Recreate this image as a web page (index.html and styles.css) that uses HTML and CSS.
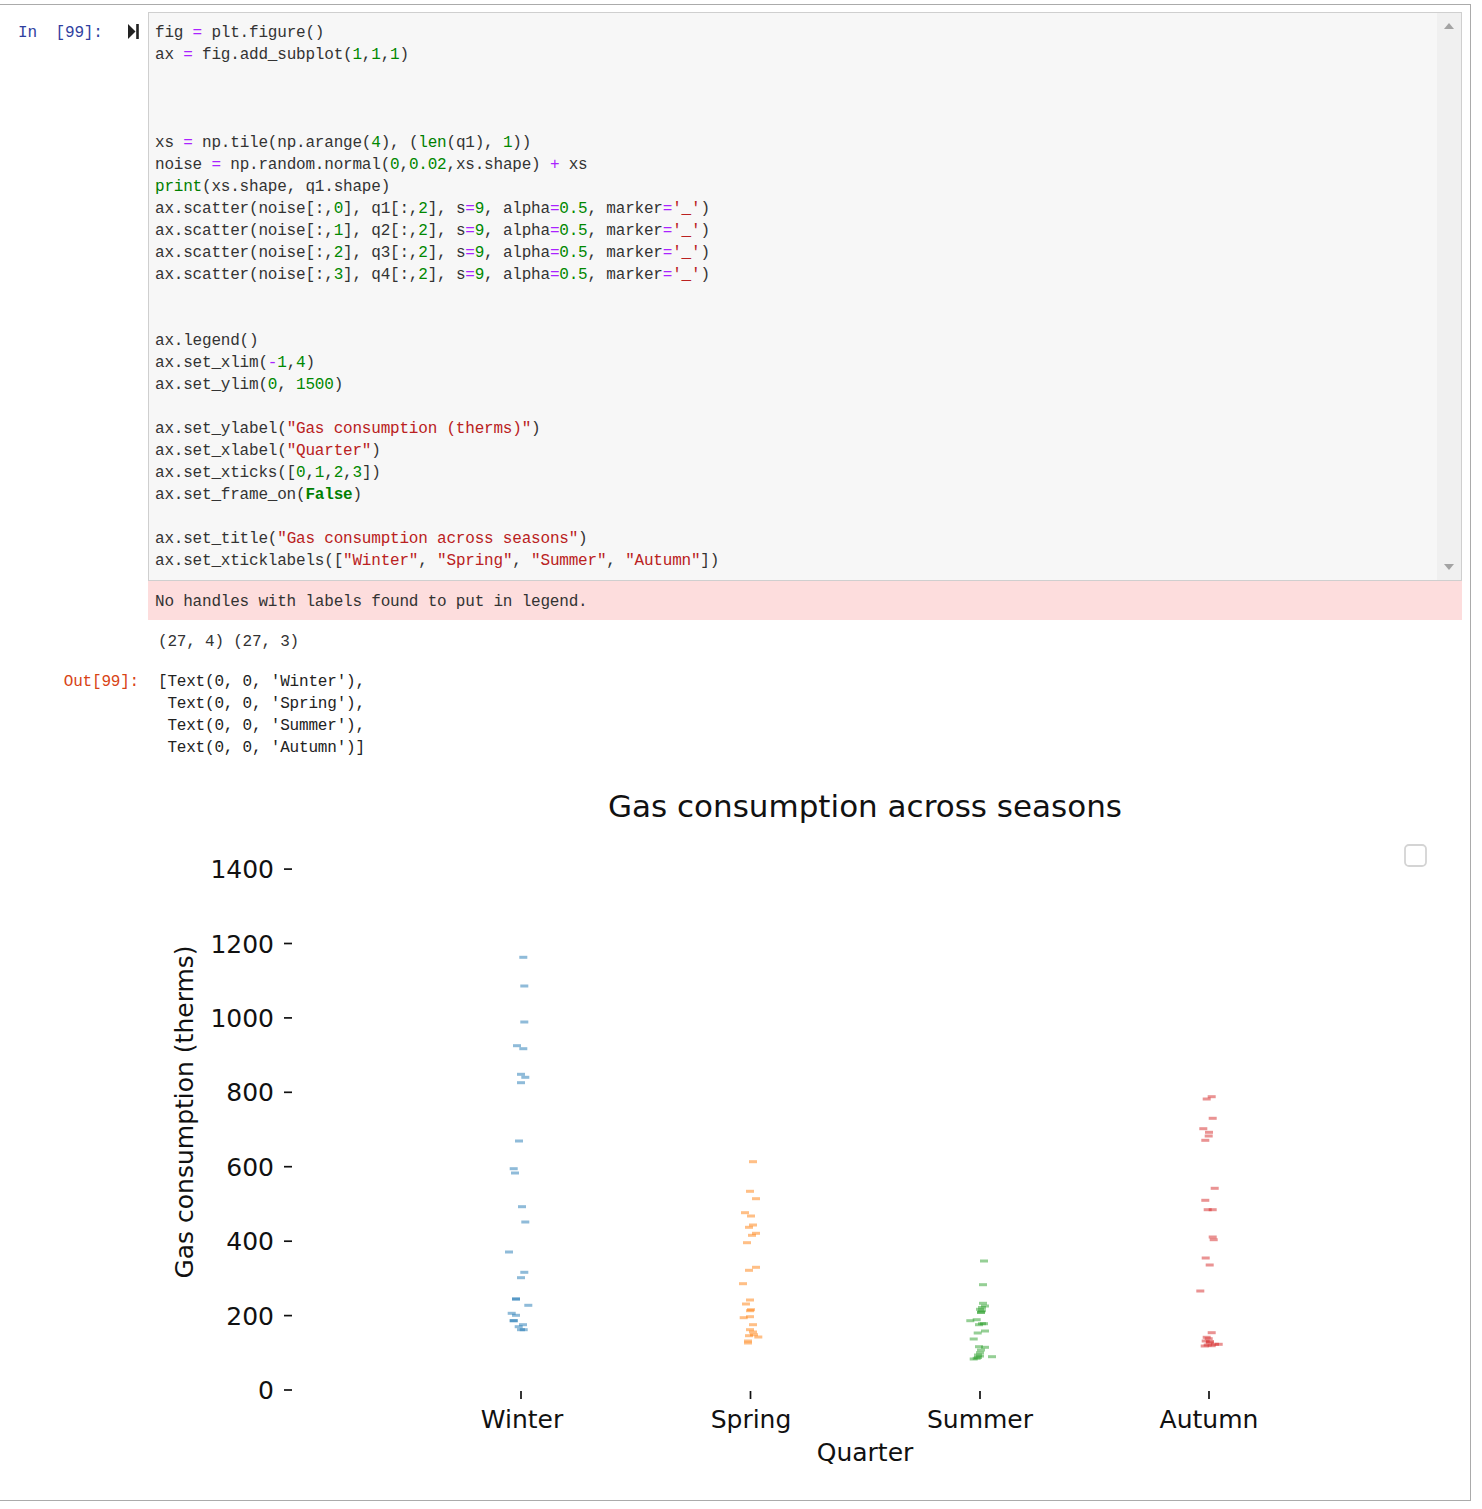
FILE: index.html
```html
<!DOCTYPE html>
<html>
<head>
<meta charset="utf-8">
<title>Notebook cell</title>
<link rel="stylesheet" href="styles.css">
</head>
<body>
<div class="cell">
  <div class="input-row">
    <div class="in-prompt">
      <span class="prompt-text">In&nbsp;&nbsp;[99]:</span>
      <svg class="run-icon" width="11" height="15" viewBox="0 0 11 15"><path d="M0 0 L7.5 7.5 L0 15 Z" fill="#222"/><rect x="8.2" y="0" width="2.6" height="15" fill="#222"/></svg>
    </div>
    <div class="input-box">
      <div class="code">
        <div class="ln">fig <span class="o">=</span> plt.figure()</div>
        <div class="ln">ax <span class="o">=</span> fig.add_subplot(<span class="n">1</span>,<span class="n">1</span>,<span class="n">1</span>)</div>
        <div class="ln"></div>
        <div class="ln"></div>
        <div class="ln"></div>
        <div class="ln">xs <span class="o">=</span> np.tile(np.arange(<span class="n">4</span>), (<span class="b">len</span>(q1), <span class="n">1</span>))</div>
        <div class="ln">noise <span class="o">=</span> np.random.normal(<span class="n">0</span>,<span class="n">0.02</span>,xs.shape) <span class="o">+</span> xs</div>
        <div class="ln"><span class="b">print</span>(xs.shape, q1.shape)</div>
        <div class="ln">ax.scatter(noise[:,<span class="n">0</span>], q1[:,<span class="n">2</span>], s<span class="o">=</span><span class="n">9</span>, alpha<span class="o">=</span><span class="n">0.5</span>, marker<span class="o">=</span><span class="s">'_'</span>)</div>
        <div class="ln">ax.scatter(noise[:,<span class="n">1</span>], q2[:,<span class="n">2</span>], s<span class="o">=</span><span class="n">9</span>, alpha<span class="o">=</span><span class="n">0.5</span>, marker<span class="o">=</span><span class="s">'_'</span>)</div>
        <div class="ln">ax.scatter(noise[:,<span class="n">2</span>], q3[:,<span class="n">2</span>], s<span class="o">=</span><span class="n">9</span>, alpha<span class="o">=</span><span class="n">0.5</span>, marker<span class="o">=</span><span class="s">'_'</span>)</div>
        <div class="ln">ax.scatter(noise[:,<span class="n">3</span>], q4[:,<span class="n">2</span>], s<span class="o">=</span><span class="n">9</span>, alpha<span class="o">=</span><span class="n">0.5</span>, marker<span class="o">=</span><span class="s">'_'</span>)</div>
        <div class="ln"></div>
        <div class="ln"></div>
        <div class="ln">ax.legend()</div>
        <div class="ln">ax.set_xlim(<span class="o">-</span><span class="n">1</span>,<span class="n">4</span>)</div>
        <div class="ln">ax.set_ylim(<span class="n">0</span>, <span class="n">1500</span>)</div>
        <div class="ln"></div>
        <div class="ln">ax.set_ylabel(<span class="s">"Gas consumption (therms)"</span>)</div>
        <div class="ln">ax.set_xlabel(<span class="s">"Quarter"</span>)</div>
        <div class="ln">ax.set_xticks([<span class="n">0</span>,<span class="n">1</span>,<span class="n">2</span>,<span class="n">3</span>])</div>
        <div class="ln">ax.set_frame_on(<span class="k">False</span>)</div>
        <div class="ln"></div>
        <div class="ln">ax.set_title(<span class="s">"Gas consumption across seasons"</span>)</div>
        <div class="ln">ax.set_xticklabels([<span class="s">"Winter"</span>, <span class="s">"Spring"</span>, <span class="s">"Summer"</span>, <span class="s">"Autumn"</span>])</div>
      </div>
      <div class="scrollbar">
        <span class="arrow-up"></span>
        <span class="arrow-down"></span>
      </div>
    </div>
  </div>

  <div class="stderr">No handles with labels found to put in legend.</div>
  <div class="stdout">(27, 4) (27, 3)</div>

  <div class="out-row">
    <div class="out-prompt">Out[99]:</div>
    <div class="out-text">
      <div class="ln">[Text(0, 0, 'Winter'),</div>
      <div class="ln"> Text(0, 0, 'Spring'),</div>
      <div class="ln"> Text(0, 0, 'Summer'),</div>
      <div class="ln"> Text(0, 0, 'Autumn')]</div>
    </div>
  </div>

  <svg class="chart" width="1314" height="730" viewBox="0 0 1314 730">
    <g transform="translate(-148 -762)">
      <text class="title" x="865" y="817">Gas consumption across seasons</text>

      <g class="ticks">
        <line x1="284" y1="1390" x2="292" y2="1390"/>
        <line x1="284" y1="1315.6" x2="292" y2="1315.6"/>
        <line x1="284" y1="1241.2" x2="292" y2="1241.2"/>
        <line x1="284" y1="1166.7" x2="292" y2="1166.7"/>
        <line x1="284" y1="1092.3" x2="292" y2="1092.3"/>
        <line x1="284" y1="1017.9" x2="292" y2="1017.9"/>
        <line x1="284" y1="943.5" x2="292" y2="943.5"/>
        <line x1="284" y1="869.1" x2="292" y2="869.1"/>
        <line x1="521" y1="1391" x2="521" y2="1399"/>
        <line x1="750.5" y1="1391" x2="750.5" y2="1399"/>
        <line x1="980" y1="1391" x2="980" y2="1399"/>
        <line x1="1209" y1="1391" x2="1209" y2="1399"/>
      </g>

      <g class="ylabels">
        <text x="274" y="1399">0</text>
        <text x="274" y="1324.7">200</text>
        <text x="274" y="1250.3">400</text>
        <text x="274" y="1175.8">600</text>
        <text x="274" y="1101.4">800</text>
        <text x="274" y="1027">1000</text>
        <text x="274" y="952.6">1200</text>
        <text x="274" y="878.2">1400</text>
      </g>

      <g class="xlabels">
        <text x="522" y="1428">Winter</text>
        <text x="751" y="1428">Spring</text>
        <text x="980" y="1428">Summer</text>
        <text x="1209" y="1428">Autumn</text>
        <text x="865" y="1461">Quarter</text>
      </g>

      <text class="ylabel" transform="translate(193 1112) rotate(-90)">Gas consumption (therms)</text>

      <rect class="legend" x="1405" y="845" width="21" height="21" rx="4"/>

      <g class="pts blue">
        <rect x="519.3" y="955.8" width="8" height="3"/>
        <rect x="520.3" y="984.5" width="8" height="3"/>
        <rect x="520.3" y="1020.5" width="8" height="3"/>
        <rect x="513" y="1044.2" width="8" height="3"/>
        <rect x="519.3" y="1047.2" width="8" height="3"/>
        <rect x="517" y="1072.8" width="8" height="3"/>
        <rect x="521.3" y="1075.8" width="8" height="3"/>
        <rect x="517" y="1081.2" width="8" height="3"/>
        <rect x="515" y="1139.5" width="8" height="3"/>
        <rect x="509.7" y="1167.2" width="8" height="3"/>
        <rect x="511" y="1171.5" width="8" height="3"/>
        <rect x="518" y="1205.2" width="8" height="3"/>
        <rect x="521.3" y="1220.5" width="8" height="3"/>
        <rect x="505" y="1250.5" width="8" height="3"/>
        <rect x="520.3" y="1270.8" width="8" height="3"/>
        <rect x="517" y="1276.2" width="8" height="3"/>
        <rect x="512" y="1297.5" width="8" height="3"/>
        <rect x="512" y="1297.5" width="8" height="3"/>
        <rect x="524.3" y="1303.8" width="8" height="3"/>
        <rect x="507.7" y="1311.8" width="8" height="3"/>
        <rect x="512" y="1313.8" width="8" height="3"/>
        <rect x="509.7" y="1319.2" width="8" height="3"/>
        <rect x="509.7" y="1319.2" width="8" height="3"/>
        <rect x="514.7" y="1325.2" width="8" height="3"/>
        <rect x="519" y="1323.2" width="8" height="3"/>
        <rect x="519.7" y="1328.2" width="8" height="3"/>
        <rect x="517" y="1328.2" width="8" height="3"/>
      </g>

      <g class="pts orange">
        <rect x="749" y="1160.2" width="8" height="3"/>
        <rect x="746" y="1189.8" width="8" height="3"/>
        <rect x="752" y="1197.2" width="8" height="3"/>
        <rect x="741" y="1211.2" width="8" height="3"/>
        <rect x="747" y="1214.5" width="8" height="3"/>
        <rect x="749" y="1223.5" width="8" height="3"/>
        <rect x="745" y="1225.8" width="8" height="3"/>
        <rect x="752" y="1231.8" width="8" height="3"/>
        <rect x="748" y="1233.8" width="8" height="3"/>
        <rect x="743" y="1241.2" width="8" height="3"/>
        <rect x="752" y="1265.8" width="8" height="3"/>
        <rect x="745" y="1268.8" width="8" height="3"/>
        <rect x="739" y="1282.2" width="8" height="3"/>
        <rect x="746" y="1298.5" width="8" height="3"/>
        <rect x="742" y="1302.5" width="8" height="3"/>
        <rect x="747" y="1308.2" width="8" height="3"/>
        <rect x="746" y="1309.2" width="8" height="3"/>
        <rect x="746" y="1315.2" width="8" height="3"/>
        <rect x="739.7" y="1316.2" width="8" height="3"/>
        <rect x="749" y="1323.2" width="8" height="3"/>
        <rect x="746" y="1328.2" width="8" height="3"/>
        <rect x="749" y="1330.5" width="8" height="3"/>
        <rect x="745" y="1334.2" width="8" height="3"/>
        <rect x="750" y="1333.2" width="8" height="3"/>
        <rect x="754.3" y="1335.5" width="8" height="3"/>
        <rect x="744" y="1339.5" width="8" height="3"/>
        <rect x="744" y="1341.5" width="8" height="3"/>
      </g>

      <g class="pts green">
        <rect x="980" y="1259.5" width="8" height="3"/>
        <rect x="979" y="1283.2" width="8" height="3"/>
        <rect x="979" y="1301.8" width="8" height="3"/>
        <rect x="981" y="1304.5" width="8" height="3"/>
        <rect x="976" y="1307.8" width="8" height="3"/>
        <rect x="978" y="1309.2" width="8" height="3"/>
        <rect x="977" y="1310.8" width="8" height="3"/>
        <rect x="977" y="1310.8" width="8" height="3"/>
        <rect x="966.3" y="1319.2" width="8" height="3"/>
        <rect x="972.7" y="1318.2" width="8" height="3"/>
        <rect x="978" y="1322.2" width="8" height="3"/>
        <rect x="980" y="1322.2" width="8" height="3"/>
        <rect x="975" y="1323.2" width="8" height="3"/>
        <rect x="981" y="1329.5" width="8" height="3"/>
        <rect x="973.7" y="1331.5" width="8" height="3"/>
        <rect x="969.7" y="1337.5" width="8" height="3"/>
        <rect x="975" y="1345.2" width="8" height="3"/>
        <rect x="981" y="1345.8" width="8" height="3"/>
        <rect x="977" y="1348.5" width="8" height="3"/>
        <rect x="976" y="1351.2" width="8" height="3"/>
        <rect x="974" y="1353.5" width="8" height="3"/>
        <rect x="988" y="1355.2" width="8" height="3"/>
        <rect x="972.7" y="1356.8" width="8" height="3"/>
        <rect x="969.7" y="1357.5" width="8" height="3"/>
        <rect x="976" y="1354.5" width="8" height="3"/>
        <rect x="978" y="1306" width="8" height="3"/>
        <rect x="974" y="1356" width="8" height="3"/>
      </g>

      <g class="pts red">
        <rect x="1207.7" y="1095.2" width="8" height="3"/>
        <rect x="1202.7" y="1097.5" width="8" height="3"/>
        <rect x="1208.7" y="1116.8" width="8" height="3"/>
        <rect x="1199.3" y="1127.2" width="8" height="3"/>
        <rect x="1205" y="1130.8" width="8" height="3"/>
        <rect x="1204.7" y="1134.5" width="8" height="3"/>
        <rect x="1201.3" y="1138.8" width="8" height="3"/>
        <rect x="1210.7" y="1186.8" width="8" height="3"/>
        <rect x="1201.3" y="1198.8" width="8" height="3"/>
        <rect x="1203.7" y="1208.2" width="8" height="3"/>
        <rect x="1208.7" y="1208.2" width="8" height="3"/>
        <rect x="1208.7" y="1235.5" width="8" height="3"/>
        <rect x="1209.7" y="1238.2" width="8" height="3"/>
        <rect x="1201.7" y="1256.5" width="8" height="3"/>
        <rect x="1205.7" y="1263.5" width="8" height="3"/>
        <rect x="1196.3" y="1289.5" width="8" height="3"/>
        <rect x="1207.7" y="1331.2" width="8" height="3"/>
        <rect x="1202.7" y="1335.8" width="8" height="3"/>
        <rect x="1204.7" y="1337.2" width="8" height="3"/>
        <rect x="1201.7" y="1339.5" width="8" height="3"/>
        <rect x="1205.7" y="1341.2" width="8" height="3"/>
        <rect x="1211" y="1342.8" width="8" height="3"/>
        <rect x="1214.7" y="1342.8" width="8" height="3"/>
        <rect x="1207.7" y="1344.2" width="8" height="3"/>
        <rect x="1200.7" y="1344.5" width="8" height="3"/>
        <rect x="1203.7" y="1343.5" width="8" height="3"/>
        <rect x="1206" y="1340" width="8" height="3"/>
      </g>
    </g>
  </svg>
</div>
</body>
</html>
```

FILE: styles.css
```css
html, body {
  margin: 0;
  padding: 0;
  background: #ffffff;
}

body {
  font-family: "Liberation Mono", "DejaVu Sans Mono", monospace;
  font-size: 16px;
  color: #333333;
}

.cell {
  margin-top: 4px;
  width: 1471px;
  box-sizing: border-box;
  border: 1px solid #ababab;
  border-left: none;
  padding: 7px 8px 8px 0;
}

.input-row {
  display: flex;
}

.in-prompt {
  width: 148px;
  flex: none;
  display: flex;
  align-items: flex-start;
  padding-top: 10px;
  box-sizing: border-box;
}

.prompt-text {
  margin-left: 18px;
  line-height: 22px;
  color: #303f9f;
  letter-spacing: -0.2px;
  white-space: pre;
}

.run-icon {
  margin-left: auto;
  margin-right: 9px;
  margin-top: 2px;
}

.input-box {
  flex: 1;
  display: flex;
  background: #f7f7f7;
  border: 1px solid #cfcfcf;
  height: 569px;
  box-sizing: border-box;
}

.code {
  flex: 1;
  padding: 9px 6px 8px 6px;
  font-size: 16px;
  letter-spacing: -0.2px;
  color: #333333;
  overflow: hidden;
}

.ln {
  height: 22px;
  line-height: 22px;
  white-space: pre;
}

.o { color: #aa22ff; }
.n { color: #008800; }
.s { color: #ba2121; }
.b { color: #008000; }
.k { color: #008000; font-weight: bold; }

.scrollbar {
  width: 24px;
  flex: none;
  background: #f0f0f0;
  display: flex;
  flex-direction: column;
  justify-content: space-between;
  align-items: center;
  padding: 10px 0 10px 0;
  box-sizing: border-box;
}

.arrow-up {
  width: 0;
  height: 0;
  border-left: 5.5px solid transparent;
  border-right: 5.5px solid transparent;
  border-bottom: 6px solid #a3a3a3;
}

.arrow-down {
  width: 0;
  height: 0;
  border-left: 5.5px solid transparent;
  border-right: 5.5px solid transparent;
  border-top: 6px solid #a3a3a3;
}

.stderr {
  margin-left: 148px;
  background: #fddddd;
  padding: 10px 7px 7px 7px;
  line-height: 22px;
  letter-spacing: -0.2px;
  color: #333333;
}

.stdout {
  margin-left: 148px;
  padding: 11px 0 0 10px;
  line-height: 22px;
  letter-spacing: -0.2px;
  color: #333333;
  white-space: pre;
}

.out-row {
  display: flex;
  margin-top: 18px;
}

.out-prompt {
  width: 148px;
  flex: none;
  box-sizing: border-box;
  text-align: right;
  padding-right: 9px;
  line-height: 22px;
  letter-spacing: -0.2px;
  color: #d84315;
}

.out-text {
  padding-left: 10px;
  font-size: 16px;
  letter-spacing: -0.2px;
  color: #222222;
}

.chart {
  display: block;
  margin: 3px 0 0 148px;
  font-family: "DejaVu Sans", sans-serif;
}

.chart .title {
  font-size: 31px;
  text-anchor: middle;
  fill: #111111;
}

.chart .ticks line {
  stroke: #111111;
  stroke-width: 1.7;
}

.chart .ylabels text {
  font-size: 25px;
  text-anchor: end;
  fill: #111111;
}

.chart .xlabels text {
  font-size: 25px;
  text-anchor: middle;
  fill: #111111;
}

.chart .ylabel {
  font-size: 25px;
  text-anchor: middle;
  fill: #111111;
}

.chart .legend {
  fill: #ffffff;
  stroke: #d4d4d4;
  stroke-width: 1.8;
}

.pts rect { opacity: 0.5; }
.blue rect { fill: #1f77b4; }
.orange rect { fill: #ff7f0e; }
.green rect { fill: #2ca02c; }
.red rect { fill: #d62728; }
```
